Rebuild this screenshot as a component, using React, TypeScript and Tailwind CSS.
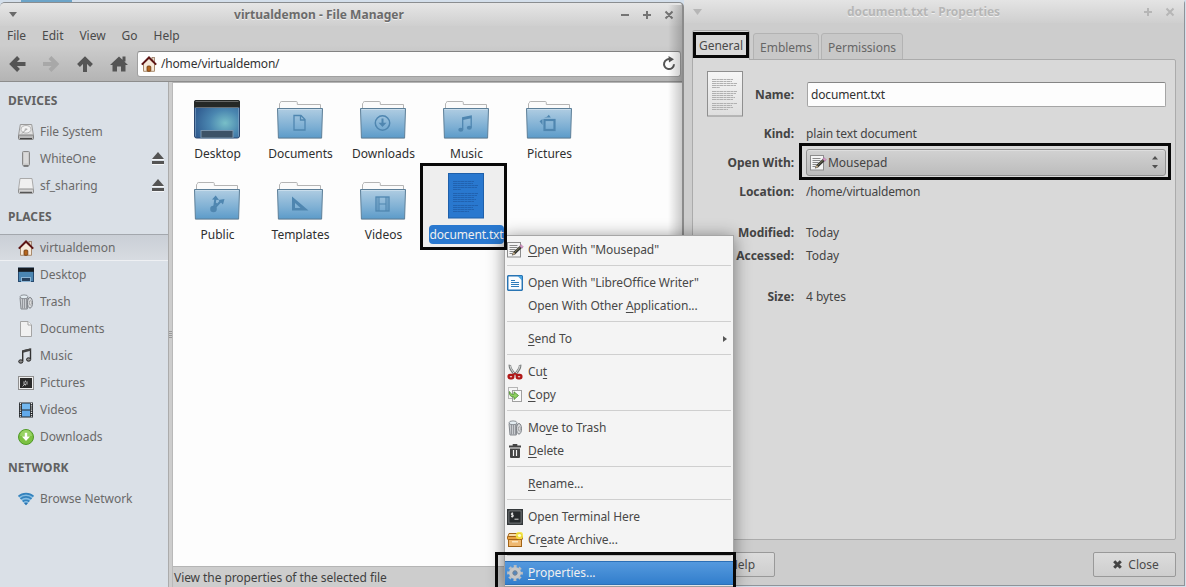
import React from "react";

type IconProps = { name: string };

function HomeIcon() {
  return (
    <svg width="16" height="16" viewBox="0 0 16 16">
      <rect x="11" y="1.5" width="2.4" height="5" fill="#e8d9c8" stroke="#8a6a50" strokeWidth=".7" />
      <path d="M2.5 15.3V7.5L8 2.2l5.500 5.300v7.800z" fill="#f6e9da" stroke="#a98a6c" strokeWidth="1" />
      <rect x="6" y="10" width="3.800" height="5.300" rx="1" fill="#b5651d" stroke="#6b3a12" strokeWidth=".8" />
      <path d="M.8 8.600L8 1.500l7.200 7.100" fill="none" stroke="#5c1414" strokeWidth="2" />
    </svg>
  );
}

function TrashIcon() {
  return (
    <svg width="16" height="16" viewBox="0 0 16 16">
      <path d="M2 3.500h8l-.7 11.500H3z" fill="#c9ccd0" stroke="#85898e" />
      <path d="M4.500 4v10.500M6.500 4v10.500M8.500 4v10.500" stroke="#8d9196" strokeWidth=".9" />
      <ellipse cx="6" cy="2.800" rx="4" ry="1.900" fill="#e4edf2" stroke="#85898e" strokeWidth=".9" />
      <ellipse cx="12" cy="8.800" rx="2.500" ry="5.300" fill="#d9dbde" stroke="#7c8085" />
      <ellipse cx="12.300" cy="8.800" rx="1" ry="2.200" fill="#eee" stroke="#888" strokeWidth=".7" />
    </svg>
  );
}

function MousepadIcon() {
  return (
    <svg width="17" height="16" viewBox="0 0 17 16">
      <rect x=".5" y=".5" width="13" height="14.500" fill="#f4f4f4" stroke="#8c8c8c" />
      <path d="M2.500 3.500h8M2.500 5.500h8M2.500 7.500h6M2.500 9.500h4M2.500 11.500h3" stroke="#888" strokeWidth="1" />
      <path d="M5.200 13.200l1.300-3.400 6.800-6.400 2 2.200-6.800 6.400z" fill="#333" />
      <path d="M7.500 10.500l5.800-5.400" stroke="#77764c" strokeWidth="1" />
      <path d="M12.600 4.100l1.500-1.500 2.200 2.300-1.500 1.400z" fill="#d79ac8" stroke="#a06c95" strokeWidth=".5" />
      <path d="M5.200 13.200l1.300-3.400 2 2.200z" fill="#e2c79a" stroke="#333" strokeWidth=".4" />
    </svg>
  );
}

function Icon({ name }: IconProps) {
  switch (name) {
    case "home":
      return <HomeIcon />;
    case "trash":
      return <TrashIcon />;
    case "mousepad":
      return <MousepadIcon />;
    case "disk":
      return (
        <svg width="16" height="16" viewBox="0 0 16 16">
          <path d="M2.300.5h11.400l1.800 11H.5z" fill="#e2e2e2" stroke="#9a9a9a" />
          <ellipse cx="8" cy="5.300" rx="5" ry="3.800" fill="#f3f3f3" stroke="#b5b5b5" />
          <ellipse cx="8" cy="5.300" rx="1.500" ry="1" fill="#bbb" />
          <path d="M8 5.500L4 9.500" stroke="#999" />
          <rect x=".5" y="11" width="15" height="4.500" rx="1" fill="#b9b9b9" stroke="#808080" />
          <path d="M2 14.500h12" stroke="#444" />
        </svg>
      );
    case "usb":
      return (
        <svg width="16" height="16" viewBox="0 0 16 16">
          <rect x="4.500" y=".5" width="7" height="14" rx="1" fill="#c9c9c9" stroke="#888" />
          <rect x="6" y="1.500" width="4" height="11" fill="#dadada" />
          <path d="M5.500 15.200h5" stroke="#555" />
        </svg>
      );
    case "drive":
      return (
        <svg width="16" height="16" viewBox="0 0 16 16">
          <path d="M2 .5h12l1.500 11H.5z" fill="#f0f0f0" stroke="#aaa" />
          <rect x=".5" y="11" width="15" height="4.300" rx="1" fill="#d4d4d4" stroke="#909090" />
          <path d="M2 14.300h12" stroke="#3a3a3a" />
        </svg>
      );
    case "desktop":
      return (
        <svg width="16" height="16" viewBox="0 0 16 16">
          <rect x=".5" y="1" width="15" height="13.500" fill="#4b86b2" stroke="#284b70" />
          <rect x="0" y=".8" width="16" height="4" fill="#151a20" />
          <rect x="3.500" y="10.500" width="9" height="4" fill="#29435f" stroke="#8db5d4" />
        </svg>
      );
    case "document":
      return (
        <svg width="16" height="16" viewBox="0 0 16 16">
          <path d="M2.500.5h7.500l3.500 3.500v11.500h-11z" fill="#f1f1f1" stroke="#a4a4a4" />
          <path d="M10 .5v3.500h3.500" fill="#fff" stroke="#a4a4a4" />
        </svg>
      );
    case "music":
      return (
        <svg width="16" height="16" viewBox="0 0 16 16">
          <path d="M4.700 13V3L12.500 1.200V11" fill="none" stroke="#333" strokeWidth="1.400" />
          <path d="M4.700 3.500l7.800-1.900" stroke="#444" strokeWidth="2.400" />
          <ellipse cx="2.800" cy="13.500" rx="2.100" ry="1.700" fill="#888" stroke="#252525" />
          <ellipse cx="10.600" cy="11.500" rx="2.100" ry="1.700" fill="#888" stroke="#252525" />
        </svg>
      );
    case "picture":
      return (
        <svg width="16" height="16" viewBox="0 0 16 16">
          <rect x=".5" y="1.500" width="15" height="13" fill="#eee" stroke="#8f8f8f" />
          <rect x="2" y="3" width="12" height="10" fill="#2a2a2a" />
          <path d="M4.500 11.500l3-3M7.500 5.500v5M5 8h5M5.800 6.300l3.400 3.400M9.200 6.300L5.800 9.700" stroke="#c4c4c4" strokeWidth=".9" />
          <circle cx="7.500" cy="8" r="1" fill="#444" />
        </svg>
      );
    case "video":
      return (
        <svg width="16" height="16" viewBox="0 0 16 16">
          <rect x="1" y=".5" width="14" height="15" fill="#23272b" />
          <rect x="4" y="1.500" width="8" height="6" fill="#73b8f0" />
          <rect x="4" y="8.500" width="8" height="6" fill="#61a9ea" />
          <path d="M2.500 1v14M13.500 1v14" stroke="#e8e8e8" strokeWidth="1.300" strokeDasharray="1.200 1" />
        </svg>
      );
    case "download":
      return (
        <svg width="16" height="16" viewBox="0 0 16 16">
          <circle cx="8" cy="8" r="7.500" fill="#7cc142" stroke="#4f9a27" />
          <path d="M2 7a6 6 0 0 1 12 0z" fill="#98d365" />
          <path d="M8 3.800v5" stroke="#fff" strokeWidth="2.400" />
          <path d="M4 7.600h8L8 12z" fill="#fff" />
        </svg>
      );
    case "network":
      return (
        <svg width="16" height="14" viewBox="0 0 16 14">
          <path d="M.5 4.500C4.500.6 11.500.6 15.500 4.500L8 13.300z" fill="#86bde2" />
          <path d="M.5 4.500C4.500.6 11.500.6 15.500 4.500M2.500 7c2.900-2.800 8.100-2.800 11 0M4.700 9.500c1.800-1.600 4.800-1.600 6.600 0" fill="none" stroke="#3382bd" strokeWidth="1.700" />
          <path d="M6 11.100c1.200-.8 2.800-.8 4 0L8 13.300z" fill="#2b75b2" />
        </svg>
      );
    case "writer":
      return (
        <svg width="16" height="16" viewBox="0 0 16 16">
          <rect x=".7" y=".7" width="14.600" height="14.600" rx="1" fill="#fbfdff" stroke="#2874b3" strokeWidth="1.500" />
          <path d="M10.500 1H15v4.500z" fill="#4aa3df" />
          <path d="M4 5.500h4M4 7.500h8M4 9.500h8M4 11.500h8" stroke="#2f7cba" />
        </svg>
      );
    case "cut":
      return (
        <svg width="16" height="16" viewBox="0 0 16 16">
          <path d="M3 .8c-.6 2 .7 5 5.200 10M13 .8c.6 2-.7 5-5.200 10" stroke="#777b7b" strokeWidth="2.600" fill="none" />
          <path d="M3.100 1.500c0 2 1.500 5 5 9M12.900 1.500c0 2-1.500 5-5 9" stroke="#dedede" strokeWidth="1" fill="none" />
          <rect x="1.600" y="11" width="4.700" height="3.300" rx="1.600" fill="none" stroke="#b01818" strokeWidth="2.300" />
          <rect x="9.700" y="11" width="4.700" height="3.300" rx="1.600" fill="none" stroke="#b01818" strokeWidth="2.300" />
          <path d="M5.500 11L8 9.500l2.500 1.500" stroke="#b01818" strokeWidth="1.500" fill="none" />
        </svg>
      );
    case "copy":
      return (
        <svg width="16" height="16" viewBox="0 0 16 16">
          <rect x="1.500" y=".5" width="9" height="11" fill="#f5f5f5" stroke="#b5b5b5" />
          <rect x="5.500" y="3.500" width="9" height="11" fill="#fafafa" stroke="#a0a0a0" />
          <path d="M2.500 4.500c-.5 4 1.500 5.500 4.500 5.500v2.500l4.500-4L7 4.800v2.600c-2.300 0-3.500-.6-4.500-2.900z" fill="#8fd062" stroke="#4d8c2e" strokeWidth=".8" />
        </svg>
      );
    case "delete":
      return (
        <svg width="16" height="16" viewBox="0 0 16 16">
          <path d="M2 2.500h3.700V1h4.600v1.500H14v2H2zM3 5.500h10V14q0 1-1 1H4q-1 0-1-1z" fill="#444" />
          <path d="M6.500 7v6M9.500 7v6" stroke="#f4f4f4" strokeWidth="1.200" />
        </svg>
      );
    case "terminal":
      return (
        <svg width="16" height="16" viewBox="0 0 16 16">
          <rect x=".7" y=".7" width="14.600" height="14.600" fill="#262a2c" stroke="#34383a" strokeWidth="1.400" />
          <rect x="1.900" y="1.900" width="12.200" height="12.200" fill="none" stroke="#8a8e90" strokeWidth=".8" />
          <path d="M6.200 4.300H4.400v1.600h1.800v1.700H4M5.300 3.500v5M7.500 10.200h4" stroke="#eee" strokeWidth=".9" fill="none" />
        </svg>
      );
    case "archive":
      return (
        <svg width="16" height="16" viewBox="0 0 16 16">
          <rect x="1.500" y="6.500" width="13" height="8" fill="#efb870" stroke="#a26316" />
          <path d="M2 1.500h12l1.500 4H.5z" fill="#f7dca8" stroke="#a26316" />
          <rect x=".5" y="4.500" width="15" height="3" rx=".7" fill="#e9a243" stroke="#a26316" />
          <rect x="5" y="9" width="6" height="1.500" fill="#fae4bd" />
          <circle cx="12.500" cy="3.500" r="3.800" fill="#f5e63b" opacity=".85" />
          <circle cx="12.500" cy="3.500" r="1.600" fill="#fffbd0" />
        </svg>
      );
    case "gear":
      return (
        <svg width="16" height="16" viewBox="0 0 16 16">
          <circle cx="8" cy="8" r="6.700" fill="none" stroke="#c8cacc" strokeWidth="2.400" strokeDasharray="2.900 2.362" strokeDashoffset="1.450" />
          <circle cx="8" cy="8" r="4.200" fill="none" stroke="#d4d4d4" strokeWidth="3.600" />
          <circle cx="8" cy="8" r="2.200" fill="#5a8fc9" stroke="#8d8d8d" strokeWidth=".8" />
        </svg>
      );
    default:
      return null;
  }
}

function Eject() {
  return (
    <svg width="12" height="13" viewBox="0 0 12 13">
      <path d="M6 0l6 7H0z" fill="#555" />
      <rect y="9" width="12" height="3" fill="#555" />
      <path d="M0 12.500h12M0 7.500h12" stroke="#fff" opacity=".7" />
    </svg>
  );
}

function SideItem({ icon, label, eject, active }: { icon: string; label: string; eject?: boolean; active?: boolean }) {
  return (
    <div
      className={
        active
          ? "flex h-[27px] items-center border-t border-t-[#a3a7ad] border-b border-b-[#eef0f3] bg-linear-to-b from-[#cacfd6] to-[#d7dbe1] pr-1 pl-[18px]"
          : "flex h-[27px] items-center pr-1 pl-[18px]"
      }
    >
      <div className="flex w-[22px] shrink-0 items-center">
        <Icon name={icon} />
      </div>
      <span className="flex-1">{label}</span>
      {eject && <Eject />}
    </div>
  );
}

function SideHeading({ children }: { children: React.ReactNode }) {
  return <div className="flex h-[35px] items-center pl-2 font-bold tracking-[0.05px] text-[#616161]">{children}</div>;
}

const glyphs: Record<string, React.ReactNode> = {
  Documents: <path d="M18 15.500h7l4 4v10.500H18zM24.500 15.500v4.500H29" fill="none" stroke="#4f86b0" strokeWidth="1.300" />,
  Downloads: (
    <g>
      <circle cx="23.500" cy="23" r="7.200" fill="none" stroke="#4f86b0" strokeWidth="1.500" />
      <path d="M23.500 18.500v5" stroke="#4f86b0" strokeWidth="2" />
      <path d="M19.500 22.800h8l-4 4.200z" fill="#4f86b0" />
    </g>
  ),
  Music: (
    <g>
      <path d="M20.700 29.500V17.800l8.500-1.800v11.500" fill="none" stroke="#4f86b0" strokeWidth="1.300" />
      <path d="M20.700 19l8.500-1.800" stroke="#4f86b0" strokeWidth="2.200" />
      <ellipse cx="18.800" cy="29.700" rx="2.500" ry="2" fill="#4f86b0" />
      <ellipse cx="27.300" cy="27.800" rx="2.500" ry="2" fill="#4f86b0" />
    </g>
  ),
  Pictures: (
    <g>
      <rect x="19.500" y="20" width="10" height="10" fill="none" stroke="#4f86b0" strokeWidth="2.200" />
      <path d="M19 17.500l3-.8 1.800-2 2 2.800zM17.500 19v6l-3-3.800z" fill="#4f86b0" />
    </g>
  ),
  Public: (
    <g>
      <circle cx="20.500" cy="28" r="3.300" fill="#4f86b0" />
      <path d="M21 27l1.500-10M21.500 27l6-6.500M21 22l4 2" stroke="#4f86b0" strokeWidth="2" />
      <path d="M19 18.500l3.700-4 3.300 4.500zM25.500 19l6-1-1.500 5.500z" fill="#4f86b0" />
    </g>
  ),
  Templates: <path d="M16 15.500v14h16.500zM19 22l5.500 5H19z" fillRule="evenodd" fill="#4f86b0" />,
  Videos: (
    <g>
      <rect x="17" y="16" width="13" height="14" fill="none" stroke="#4f86b0" strokeWidth="1.300" />
      <path d="M20 16v14M27 16v14M20 23h7" stroke="#4f86b0" strokeWidth="1.100" />
      <path d="M18.500 16.500v13M28.500 16.500v13" stroke="#4f86b0" strokeWidth="1.500" strokeDasharray="1 1" />
    </g>
  ),
};

function Folder({ name }: { name: string }) {
  return (
    <svg width="48" height="40" viewBox="0 0 48 40">
      <defs>
        <linearGradient id="folder" x1="0" y1="0" x2="0" y2="1">
          <stop offset="0" stopColor="#b0cde2" />
          <stop offset=".6" stopColor="#7fb0d4" />
          <stop offset="1" stopColor="#5c9bc9" />
        </linearGradient>
      </defs>
      <path d="M3.500 12V3.500l1-.8V2.200q0-.7.800-.7h15q1 0 1 1v2h23.200v7.500" fill="#fbfbfb" stroke="#b4b4b4" />
      <rect x="2" y="37.500" width="44" height="1.500" fill="#000" opacity=".12" />
      <path d="M1.500 8.500h45l-.9 29.500H2.400z" fill="url(#folder)" stroke="#5d7f98" />
      <path d="M2.500 9.500h43" stroke="#cfe2ef" opacity=".8" />
      {glyphs[name]}
    </svg>
  );
}

function DesktopLarge() {
  return (
    <svg width="48" height="40" viewBox="0 0 48 40">
      <defs>
        <radialGradient id="desk" cx=".68" cy=".6" r=".7">
          <stop offset="0" stopColor="#78bfc8" />
          <stop offset=".5" stopColor="#4a86b0" />
          <stop offset="1" stopColor="#315d91" />
        </radialGradient>
      </defs>
      <rect x="1.500" y=".5" width="45" height="37.500" rx="2" fill="url(#desk)" stroke="#2b4770" />
      <path d="M1 7.500V2q0-2 2-2h42q2 0 2 2v5.500z" fill="#252826" />
      <path d="M2.500 1.500h43M2.500 7.500h43" stroke="#777" strokeWidth=".8" />
      <path d="M2.500 8v28.500M45.500 8v28.500" stroke="#88a9c7" strokeWidth=".6" />
      <rect x="8" y="30.500" width="32" height="7.500" fill="#3d5266" stroke="#7994ad" />
    </svg>
  );
}

const folderNames = ["Desktop", "Documents", "Downloads", "Music", "Pictures", "Public", "Templates", "Videos"];

function PageIcon({ selected }: { selected?: boolean }) {
  const line = selected ? "#2469bb" : "#b0b0b0";
  return (
    <svg width="37" height="46" viewBox="0 0 37 46">
      <defs>
        <linearGradient id="page" x1="0" y1="0" x2="0" y2="1">
          <stop offset="0" stopColor="#f6f6f6" />
          <stop offset="1" stopColor="#dedede" />
        </linearGradient>
      </defs>
      <rect x=".5" y=".5" width="35" height="44.500" fill={selected ? "#2c80dc" : "url(#page)"} stroke={selected ? "#2167b5" : "#8f8f8f"} />
      <path
        d="M5 8.500h21M5 10.500h20M5 12.500h25M5 14.500h24M5 16.500h8M5 20.500h25M5 22.500h24M5 24.500h21M5 26.500h23M5 28.500h21M5 32.500h25M5 34.500h20M5 36.500h21M5 38.500h16"
        stroke={line}
        strokeWidth="1"
        strokeDasharray="4 .4 2.500 .4"
      />
    </svg>
  );
}

function FileManager() {
  return (
    <section className="flex h-[585px] w-[684px] shrink-0 flex-col self-end overflow-hidden rounded-t-[5px] border-t border-r-2 border-t-[#8a8d90] border-r-[#8b8b8b] bg-[#cdcdcd]">
      <header className="flex h-[23px] shrink-0 items-center bg-linear-to-b from-[#e6e6e6] to-[#cfcfcf] pr-[8px] pl-[9px] font-bold tracking-[0.03px] text-[#6b6b6b]">
        <svg width="8" height="5" viewBox="0 0 8 5"><path d="M0 0h8L4 5z" fill="#6a6a6a" /></svg>
        <span className="flex-1 pl-px text-center [text-shadow:0_1px_0_#eee]">virtualdemon - File Manager</span>
        <svg width="54" height="10" viewBox="0 0 54 10">
          <path d="M1 5h8M23 5h8M27 1v8M45.500 1.500l7 7M52.500 1.500l-7 7" stroke="#747474" strokeWidth="2" fill="none" />
        </svg>
      </header>
      <nav className="mt-px flex h-[18px] shrink-0 items-center gap-4 pl-[7px] text-[#4a4a4a]">
        <span>File</span><span>Edit</span><span>View</span><span>Go</span><span>Help</span>
      </nav>
      <div className="flex h-[37px] shrink-0 items-center border-b border-[#8d8d8d] bg-linear-to-b from-[#cdcdcd] to-[#b4b4b4] pl-[9px]">
        <svg className="mt-px" width="128" height="18" viewBox="0 0 128 18">
          <path d="M16.500 9h-13M9.500 2.500L3 9l6.500 6.500" fill="none" stroke="#555" strokeWidth="4" />
          <path d="M34 9h13M41 2.500L47.500 9 41 15.500" fill="none" stroke="#a8a8a8" strokeWidth="4" />
          <path d="M76 17V4M69.500 10.500L76 4l6.500 6.500" fill="none" stroke="#555" strokeWidth="4" />
          <path d="M110 1.500l9 8.500h-2.500v6.500h-4.500v-5h-4v5h-4.500V10H101zM113.500 1.500h3v5h-3z" fill="#555" />
        </svg>
        <div className="mt-px flex h-[26px] w-[544px] items-center rounded-[3px] border border-[#a0a0a0] border-t-[#838383] bg-[#fdfdfd] pr-[4px] pl-[3px] text-[#333]">
          <HomeIcon />
          <span className="flex-1 pl-[4px] tracking-[-0.18px]">/home/virtualdemon/</span>
          <svg width="14" height="15" viewBox="0 0 14 15">
            <path d="M9 3.500A5 5 0 1 0 12 8.300" fill="none" stroke="#555" strokeWidth="2" />
            <path d="M6.500 0L12 3.300 7 6.500z" fill="#555" />
          </svg>
        </div>
      </div>
      <div className="flex min-h-0 flex-1">
        <aside className="w-[168px] shrink-0 bg-[#dae0e7] pt-px text-[#6a6a6a]">
          <SideHeading>DEVICES</SideHeading>
          <SideItem icon="disk" label="File System" />
          <SideItem icon="usb" label="WhiteOne" eject />
          <SideItem icon="drive" label="sf_sharing" eject />
          <SideHeading>PLACES</SideHeading>
          <SideItem icon="home" label="virtualdemon" active />
          <SideItem icon="desktop" label="Desktop" />
          <SideItem icon="trash" label="Trash" />
          <SideItem icon="document" label="Documents" />
          <SideItem icon="music" label="Music" />
          <SideItem icon="picture" label="Pictures" />
          <SideItem icon="video" label="Videos" />
          <SideItem icon="download" label="Downloads" />
          <SideHeading>NETWORK</SideHeading>
          <SideItem icon="network" label="Browse Network" />
        </aside>
        <div className="flex w-[5px] shrink-0 flex-col items-center justify-center gap-px border-x border-l-[#ababab] border-r-[#b9b9b9] bg-[#cdcdcd]">
          <i className="h-px w-[3px] bg-[#999]" /><i className="h-px w-[3px] bg-[#999]" /><i className="h-px w-[3px] bg-[#999]" /><i className="h-px w-[3px] bg-[#999]" />
        </div>
        <div className="flex min-w-0 flex-1 flex-col">
          <div className="h-[485px] shrink-0 border-t border-b border-[#b5b5b5] bg-[#fdfdfd] pt-[17px] pl-[2px] text-[#2f2f2f]">
            <div className="grid auto-rows-[81px] grid-cols-[repeat(5,83px)]">
              {folderNames.map((f) => (
                <div key={f} className="flex flex-col items-center">
                  {f === "Desktop" ? <DesktopLarge /> : <Folder name={f} />}
                  <span className="mt-[5px] pl-[2px] leading-[17px] tracking-normal">{f}</span>
                </div>
              ))}
              <div className="flex flex-col items-center pl-px">
                <div className="-mt-[8px] h-[46px]"><PageIcon selected /></div>
                <span className="mt-[6px] ml-px rounded-[4px] bg-[#2c80dc] px-[1px] leading-[19px] tracking-[-0.15px] text-white">document.txt</span>
              </div>
            </div>
          </div>
          <div className="flex flex-1 items-center pt-[2px] pl-px tracking-[-0.07px] text-[#3f3f3f]">View the properties of the selected file</div>
        </div>
      </div>
    </section>
  );
}

function Row({ label, height, children }: { label: string; height: string; children: React.ReactNode }) {
  return (
    <div className={`flex items-center ${height}`}>
      <span className="w-[113px] shrink-0 pr-[12px] text-right font-bold whitespace-nowrap">{label}</span>
      {children}
    </div>
  );
}

function PropertiesDialog() {
  return (
    <section className="flex h-[586px] w-[501px] shrink-0 flex-col rounded-tl-[5px] rounded-tr-[4px] border-r border-b border-[#8e9499] bg-[#cdcdcd]">
      <header className="flex h-[23px] shrink-0 items-center bg-linear-to-b from-[#e4e4e4] to-[#cfcfcf] pr-[9px] pl-[9px] font-bold tracking-[-0.03px] text-[#b6b6b6]">
        <svg width="9" height="6" viewBox="0 0 9 6"><path d="M0 0h9L4.500 6z" fill="#b6b6b6" /></svg>
        <span className="flex-1 pl-[2px] text-center [text-shadow:0_1px_0_#f0f0f0]">document.txt - Properties</span>
        <svg width="32" height="10" viewBox="0 0 32 10">
          <path d="M1 5h8M5 1v8M23.500 1.500l7 7M30.500 1.500l-7 7" stroke="#b6b6b6" strokeWidth="2" fill="none" />
        </svg>
      </header>
      <div className="-mb-px flex h-[37px] shrink-0 items-end pl-[8px] text-[#666]">
        <div className="z-10 flex h-[30px] w-[58px] items-center justify-center rounded-t-[3px] border border-b-0 border-[#aaa] bg-[#d9d9d9] text-[#4a4a4a]">General</div>
        <div className="ml-[3px] flex h-[27px] w-[66px] items-center justify-center rounded-t-[3px] border border-[#b3b3b3] bg-[#c8c8c8] pt-[3px]">Emblems</div>
        <div className="ml-[2px] flex h-[27px] w-[82px] items-center justify-center rounded-t-[3px] border border-[#b3b3b3] bg-[#c8c8c8] pt-[3px]">Permissions</div>
      </div>
      <div className="mr-[8px] ml-[8px] flex h-[481px] shrink-0 flex-col rounded-r-[2px] border border-[#ababab] bg-[#d9d9d9] text-[#444]">
        <div className="flex h-[58px] pt-[11px] pl-[14px]">
          <PageIcon />
          <div className="mt-[11px] flex h-[25px] items-center">
            <span className="w-[63px] pr-[13px] text-right font-bold">Name:</span>
            <div className="flex h-[25px] w-[359px] items-center rounded-[2px] border border-[#a5a5a5] border-t-[#858585] bg-[#fdfdfd] pl-[3px] tracking-[-0.15px] text-[#303030]">document.txt</div>
          </div>
        </div>
        <Row label="Kind:" height="h-[31px]"><span className="tracking-[-0.12px]">plain text document</span></Row>
        <Row label="Open With:" height="h-[27px]">
          <div className="flex h-[27px] w-[360px] items-center rounded-[3px] border border-[#929292] bg-linear-to-b from-[#d2d2d2] to-[#bcbcbc] pr-[7px] pl-[3px] shadow-[inset_0_1px_0_#dedede]">
            <MousepadIcon />
            <span className="flex-1 pl-px">Mousepad</span>
            <svg width="6" height="13" viewBox="0 0 6 13"><path d="M0 3.500L3 0l3 3.500zM0 9h6l-3 3.500z" fill="#505050" /></svg>
          </div>
        </Row>
        <Row label="Location:" height="h-[31px]"><span className="tracking-[-0.18px]">/home/virtualdemon</span></Row>
        <div className="h-[14px]" />
        <Row label="Modified:" height="h-[23px]">Today</Row>
        <Row label="Accessed:" height="h-[23px]">Today</Row>
        <div className="h-[18px]" />
        <Row label="Size:" height="h-[23px]">4 bytes</Row>
      </div>
      <footer className="flex items-center justify-between px-[8px] pt-[12px] text-[#4a4a4a]">
        <button className="flex h-[25px] w-[83px] items-center justify-center rounded-[2px] border border-[#999] bg-linear-to-b from-[#dcdcdc] to-[#cecece] pl-[17px]">Help</button>
        <button className="flex h-[25px] w-[83px] items-center justify-center gap-[6px] rounded-[2px] border border-[#999] bg-linear-to-b from-[#dcdcdc] to-[#cecece] pl-[3px]">
          <svg width="9" height="9" viewBox="0 0 9 9"><path d="M1.200 1.200l6.600 6.600M7.800 1.200L1.200 7.800" stroke="#444" strokeWidth="3" /></svg>
          Close
        </button>
      </footer>
    </section>
  );
}

type Entry = { icon?: string; text?: [string, string, string]; sub?: boolean; active?: boolean };

const entries: Entry[] = [
  { icon: "mousepad", text: ["", "O", 'pen With "Mousepad"'] },
  {},
  { icon: "writer", text: ['Open With "LibreOffice Writer"', "", ""] },
  { text: ["Open With Other ", "A", "pplication..."] },
  {},
  { text: ["", "S", "end To"], sub: true },
  {},
  { icon: "cut", text: ["Cu", "t", ""] },
  { icon: "copy", text: ["", "C", "opy"] },
  {},
  { icon: "trash", text: ["Mo", "v", "e to Trash"] },
  { icon: "delete", text: ["", "D", "elete"] },
  {},
  { text: ["", "R", "ename..."] },
  {},
  { icon: "terminal", text: ["Open Terminal Here", "", ""] },
  { icon: "archive", text: ["Cr", "e", "ate Archive..."] },
  {},
  { icon: "gear", text: ["", "P", "roperties..."], active: true },
];

function ContextMenu() {
  return (
    <div className="absolute top-[235px] left-[504px] z-20 flex h-[352px] w-[230px] flex-col border border-[#a6a6a6] bg-[#f4f4f4] pt-[2px] text-[#484848] shadow-[0_2px_16px_rgba(0,0,0,0.45)]">
      {entries.map((e, i) =>
        e.text ? (
          <div
            key={i}
            className={
              e.active
                ? "flex h-[24px] shrink-0 items-center border-y border-[#2f76c2] bg-linear-to-b from-[#5ba3ec] to-[#3587da] pl-[2px] text-white"
                : "flex h-[23px] shrink-0 items-center pl-[2px] tracking-[-0.08px]"
            }
          >
            <span className="flex w-[21px] shrink-0">{e.icon && <Icon name={e.icon} />}</span>
            <span className="flex-1 whitespace-pre">
              {e.text[0]}
              <span className="underline underline-offset-2">{e.text[1]}</span>
              {e.text[2]}
            </span>
            {e.sub && <svg className="mr-[6px]" width="4" height="6" viewBox="0 0 4 6"><path d="M0 0l4 3-4 3z" fill="#555" /></svg>}
          </div>
        ) : (
          <div key={i} className="flex h-[10px] shrink-0 items-start px-[2px] pt-[4px]"><i className="h-px w-full bg-[#cfcfcf]" /></div>
        ),
      )}
    </div>
  );
}

export default function App() {
  return (
    <main className="relative flex h-[587px] w-[1186px] overflow-hidden bg-[#d4dfeb] font-['Noto_Sans',sans-serif] text-[12px] leading-[16px] tracking-[-0.03px]">
      <div className="absolute top-0 left-[21px] h-[2px] w-[51px] bg-[#6ca4c8]" />
      <FileManager />
      <PropertiesDialog />
      <div className="absolute top-[5px] left-[668px] h-[582px] w-[14px] bg-linear-to-r from-transparent to-black/20" />
      <ContextMenu />
      <div className="absolute top-[163px] left-[420px] z-30 h-[87px] w-[87px] border-3 border-[#080808] bg-black/6" />
      <div className="absolute top-[552px] left-[495px] z-30 h-[40px] w-[241px] border-3 border-[#080808] bg-black/6" />
      <div className="absolute top-[32px] left-[693px] z-30 h-[26px] w-[56px] border-3 border-[#080808]" />
      <div className="absolute top-[143px] left-[799px] z-30 h-[37px] w-[372px] border-3 border-[#080808]" />
    </main>
  );
}
